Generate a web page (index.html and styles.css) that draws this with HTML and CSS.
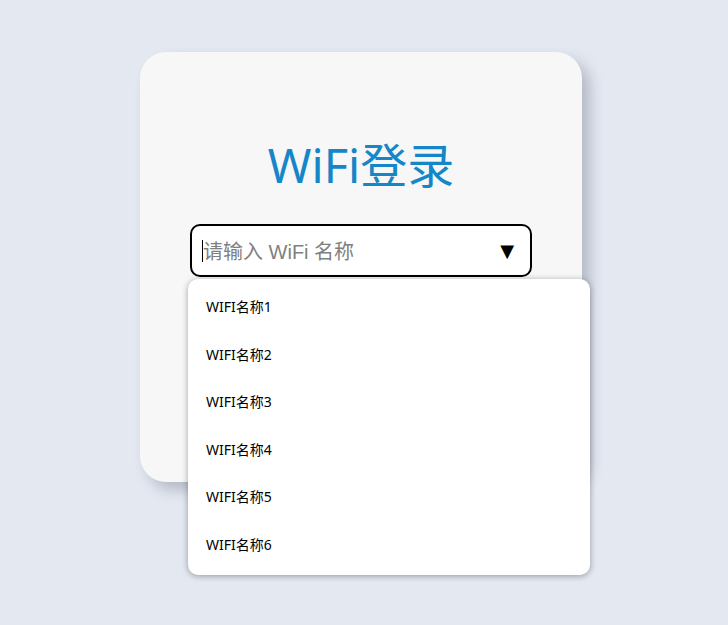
FILE: index.html
```html
<!DOCTYPE html>
<html lang="zh">
<head>
<meta charset="utf-8">
<link rel="stylesheet" href="styles.css">
</head>
<body>
<div class="page">
  <div class="card">
    <h1 class="title">WiFi登录</h1>
    <div class="field">
      <div class="input">
        <span class="caret"></span>
        <span class="placeholder">请输入 WiFi 名称</span>
        <span class="arrow">▼</span>
      </div>
      <ul class="menu">
        <li class="item">WIFI名称1</li>
        <li class="item">WIFI名称2</li>
        <li class="item">WIFI名称3</li>
        <li class="item">WIFI名称4</li>
        <li class="item">WIFI名称5</li>
        <li class="item">WIFI名称6</li>
      </ul>
    </div>
  </div>
</div>
</body>
</html>
```
FILE: styles.css
```css
html, body {
  margin: 0;
  padding: 0;
  background: #e3e8f1;
  height: 100%;
}
body {
  font-family: "Noto Sans", "Noto Sans CJK SC", sans-serif;
}
.page {
  padding: 52px 0 0 140px;
}
.card {
  width: 342px;
  height: 430px;
  padding: 0 50px;
  box-sizing: content-box;
  background: #f7f7f7;
  border-radius: 26px;
  box-shadow: 8px 8px 14px rgba(60, 70, 90, 0.28);
  display: flex;
  flex-direction: column;
}
.title {
  margin: 83px 0 0;
  height: 89px;
  text-align: center;
  font-weight: normal;
  font-size: 47px;
  line-height: 60px;
  color: #1587c8;
}
.field {
  position: relative;
}
.input {
  height: 49px;
  border: 2px solid #000;
  border-radius: 10px;
  background: #fff;
  display: flex;
  align-items: center;
  padding: 0 16px 0 10px;
}
.caret {
  width: 1px;
  height: 22px;
  background: #000;
}
.placeholder {
  flex: 1;
  font-size: 20px;
  color: #808080;
  font-family: "Liberation Sans", "Noto Sans CJK SC", sans-serif;
}
.arrow {
  font-size: 18px;
  color: #000;
  font-family: "DejaVu Sans", sans-serif;
}
.menu {
  position: absolute;
  left: -2px;
  top: 55px;
  width: 402px;
  margin: 0;
  padding: 4px 0 6px;
  list-style: none;
  background: #fff;
  border-radius: 10px;
  box-shadow: 0 1px 6px rgba(0, 0, 0, 0.35);
}
.item {
  height: 47.6px;
  line-height: 47.6px;
  padding-left: 18px;
  font-size: 14px;
  color: #000;
}
```
